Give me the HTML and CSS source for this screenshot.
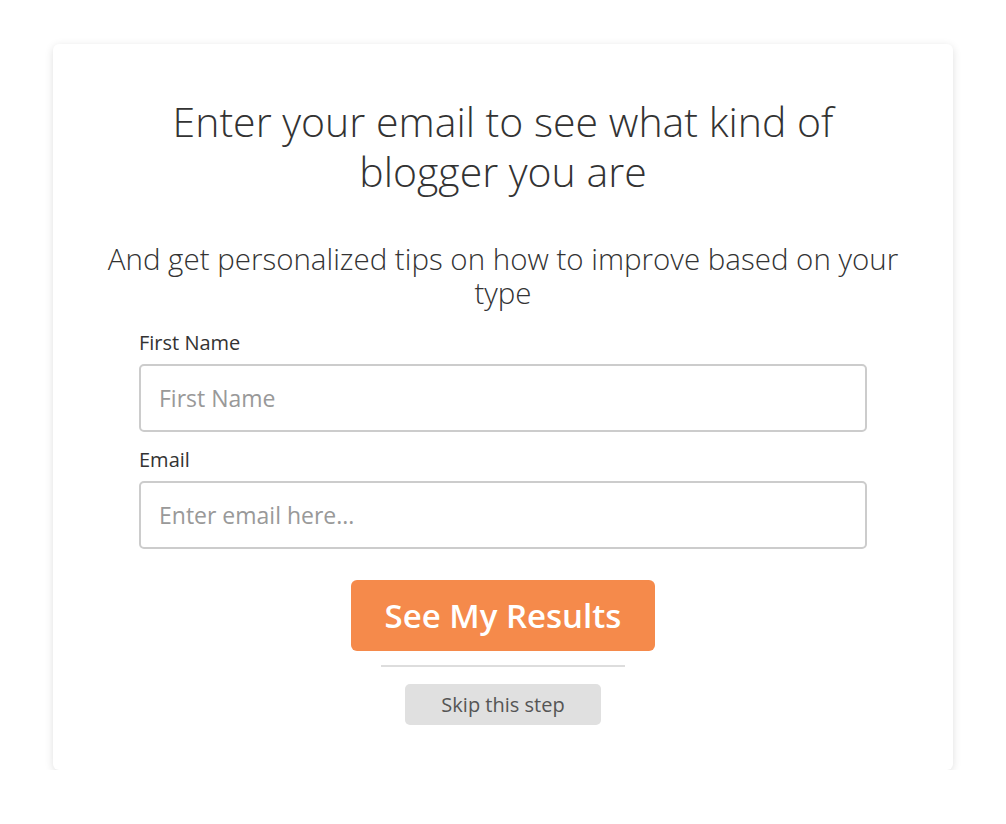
FILE: index.html
```html
<!DOCTYPE html>
<html lang="en">
<head>
    <meta charset="UTF-8">
    <meta name="viewport" content="width=device-width, initial-scale=1.0">
    <title>What kind of blogger are you?</title>
    <link rel="stylesheet" href="styles.css">
</head>
<body>

<div class="card">
    <h1>Enter your email to see what kind of blogger you are</h1>
    <p class="subtitle">And get personalized tips on how to improve based on your type</p>

    <form class="optin" onsubmit="return false;">
        <label for="firstName">First Name</label>
        <input type="text" id="firstName" placeholder="First Name">

        <label for="email">Email</label>
        <input type="email" id="email" placeholder="Enter email here...">

        <div class="actions">
            <button type="submit" class="results-btn">See My Results</button>
            <hr class="divider">
            <button type="button" class="skip-btn">Skip this step</button>
        </div>
    </form>
</div>

</body>
</html>
```

FILE: styles.css
```css
body {
    margin: 0;
    background-color: #fff;
    font-family: "Open Sans", "Noto Sans", sans-serif;
    color: #333;
}
.card {
    width: 900px;
    box-sizing: border-box;
    margin: 44px auto 0;
    padding: 52px 50px 45px;
    background-color: #fff;
    border-radius: 6px;
    box-shadow: 0 2px 8px rgba(0, 0, 0, 0.13);
    text-align: center;
}
h1 {
    font-size: 41px;
    font-weight: 300;
    line-height: 50px;
    margin: 0 auto;
    width: 720px;
    color: #333;
}
.subtitle {
    font-size: 29.5px;
    font-weight: 300;
    line-height: 34px;
    margin: 46px 0 0;
}
.optin {
    width: 728px;
    margin: 22px auto 0;
    display: flex;
    flex-direction: column;
    text-align: left;
}
.optin label {
    font-size: 20px;
    line-height: 22px;
    margin-bottom: 10px;
    color: #333;
}
.optin input {
    height: 68px;
    box-sizing: border-box;
    border: 2px solid #ccc;
    border-radius: 5px;
    padding: 0 18px;
    font-family: inherit;
    font-size: 23px;
    color: #333;
    margin-bottom: 17px;
}
.optin input::placeholder {
    color: #999;
}
.actions {
    display: flex;
    flex-direction: column;
    align-items: center;
    margin-top: 14px;
}
.results-btn {
    width: 304px;
    height: 71px;
    border: none;
    border-radius: 6px;
    background-color: #f58a4b;
    color: #fff;
    font-family: inherit;
    font-size: 33px;
    font-weight: 600;
    cursor: pointer;
}
.divider {
    width: 244px;
    border: none;
    border-top: 2px solid #ddd;
    margin: 14px 0 17px;
}
.skip-btn {
    width: 196px;
    height: 41px;
    border: none;
    border-radius: 5px;
    background-color: #e0e0e0;
    color: #555;
    font-family: inherit;
    font-size: 20px;
    cursor: pointer;
}
```
